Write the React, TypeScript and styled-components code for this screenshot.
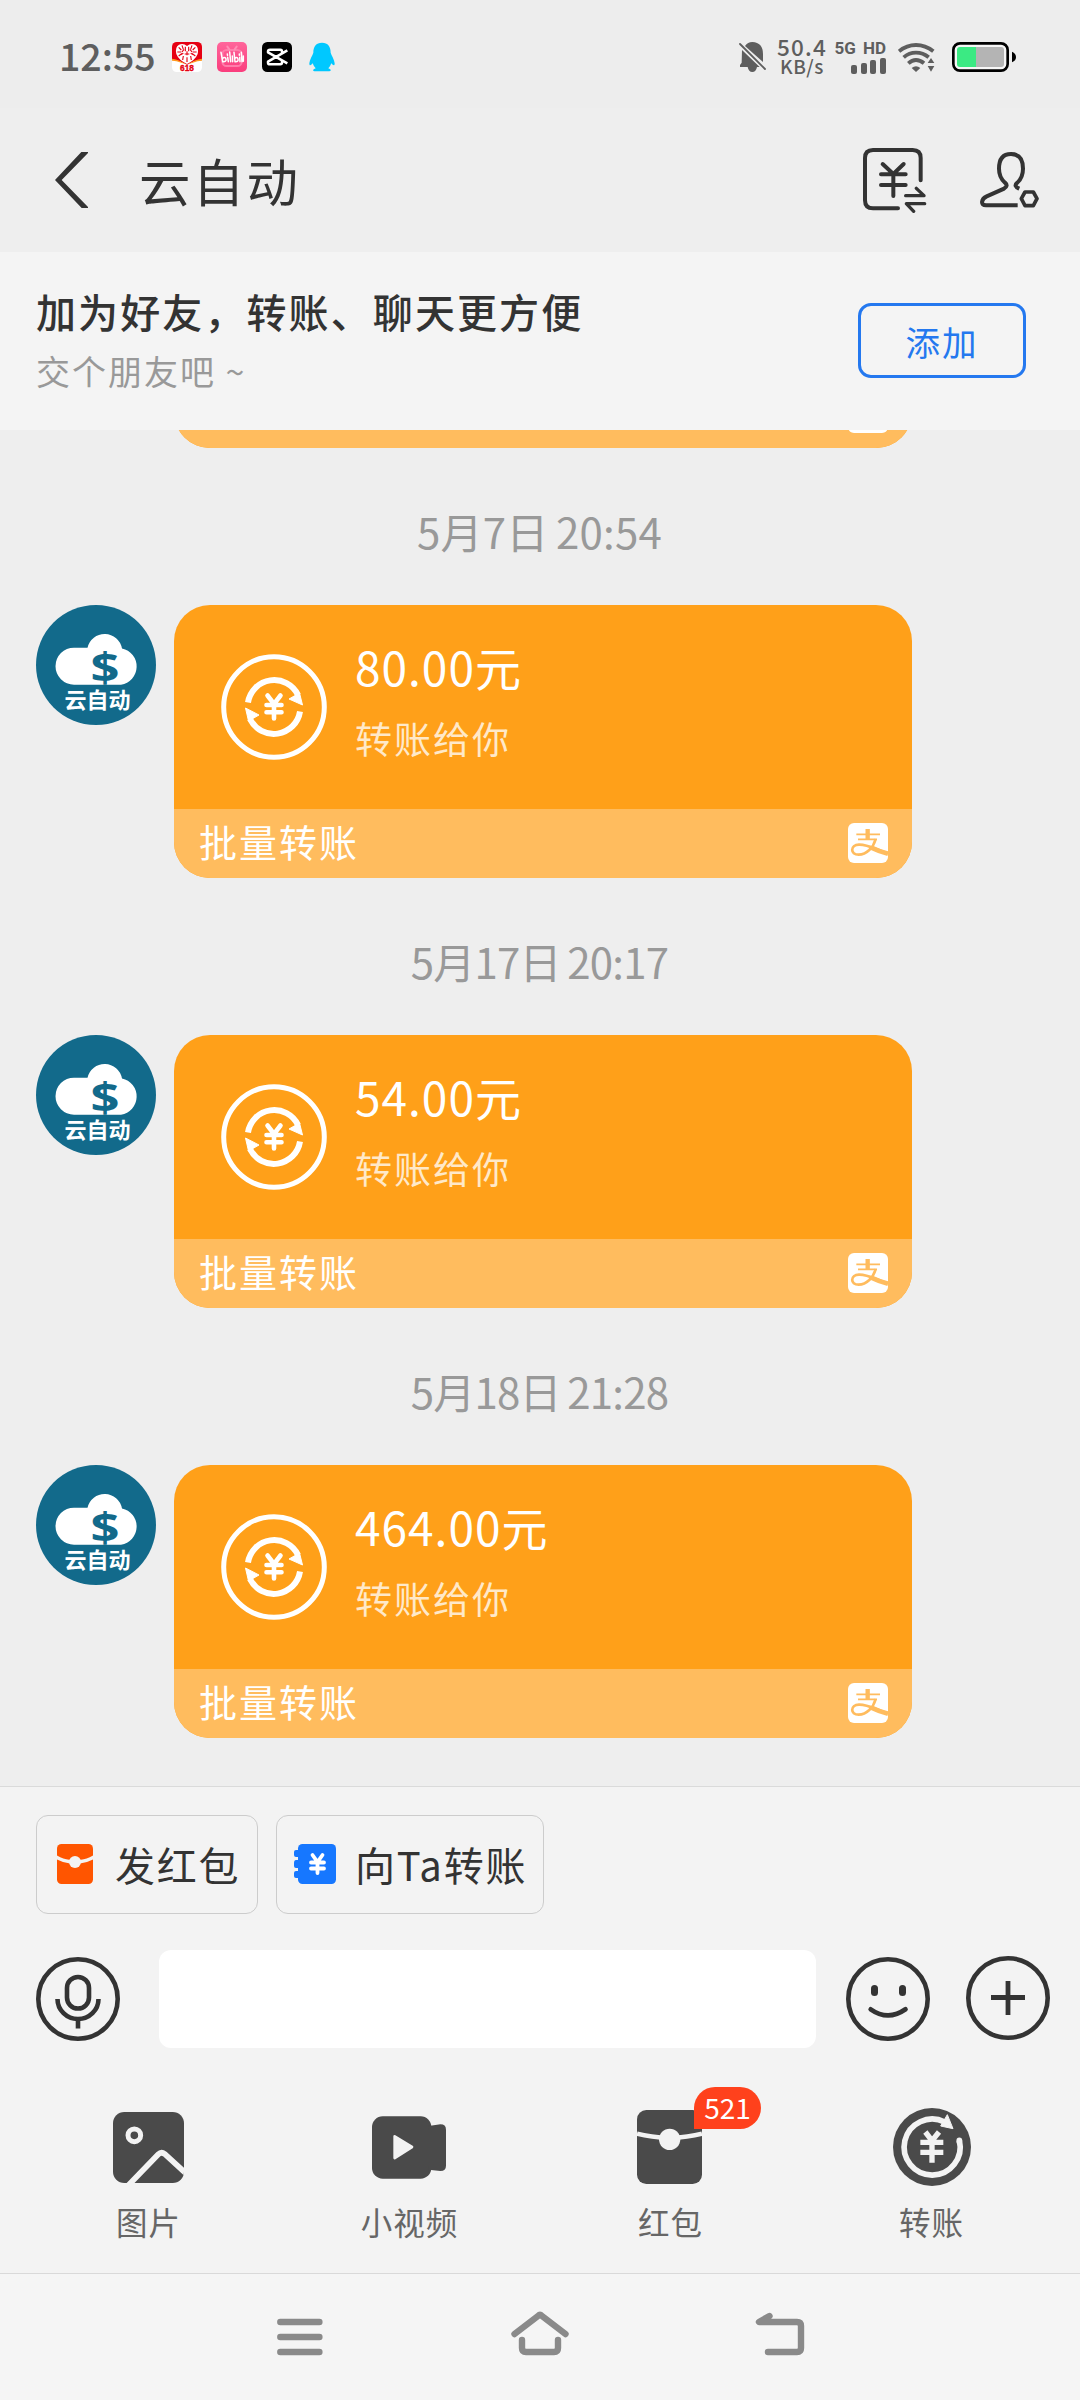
import React from 'react';
import styled, { createGlobalStyle } from 'styled-components';

const Global = createGlobalStyle`
  * { box-sizing: border-box; }
  body { margin: 0; background: #eeeeee; }
  svg { display: block; flex: none; }
`;

const Screen = styled.div`
  width: 1080px;
  height: 2400px;
  display: flex;
  flex-direction: column;
  background: #eeeeee;
  color: #333;
  font-family: 'Noto Sans CJK SC', sans-serif;
  overflow: hidden;
`;

/* ---------- status bar ---------- */
const StatusBar = styled.div`
  flex: none;
  height: 108px;
  padding: 6px 64px 0 59px;
  display: flex;
  align-items: center;
  background: #ededed;
  color: #5e5e5e;
`;
const Clock = styled.div`
  width: 113px;
  padding-bottom: 4px;
  font-size: 37.5px;
  font-weight: 500;
  line-height: 40px;
`;
const AppIcons = styled.div`
  display: flex;
  gap: 15px;
  flex: 1;
`;
const Speed = styled.div`
  width: 52px;
  margin-left: 10px;
  padding-bottom: 3px;
  text-align: center;
  font-weight: 500;
  font-size: 22.5px;
  line-height: 21px;
  letter-spacing: 1.2px;
  white-space: nowrap;
`;
const SpeedUnit = styled.div`
  font-size: 19px;
  line-height: 18px;
  letter-spacing: 0.5px;
`;
const Cellular = styled.div`
  width: 50px;
  margin: 0 12px 0 8px;
  padding-bottom: 2px;
  display: flex;
  flex-direction: column;
  align-items: flex-end;
  font-family: 'Roboto', sans-serif;
  font-weight: 700;
  font-size: 17px;
  line-height: 18px;
  word-spacing: 3px;
  white-space: nowrap;
`;
const Bars = styled.div`
  display: flex;
  align-items: flex-end;
  gap: 3.6px;
  height: 16px;
  margin-top: 1px;
`;
const Bar = styled.div<{ $h: number }>`
  width: 6px;
  height: ${(p) => p.$h}px;
  border-radius: 2px;
  background: #5e5e5e;
`;

/* ---------- header ---------- */
const Header = styled.header`
  flex: none;
  height: 144px;
  padding: 0 41px 0 55px;
  display: flex;
  align-items: center;
`;
const Title = styled.h1`
  flex: 1;
  margin: 0 0 0 51px;
  font-size: 51.5px;
  font-weight: 400;
  line-height: 76px;
  letter-spacing: 2.2px;
  padding-bottom: 1px;
`;
const HeaderActions = styled.div`
  display: flex;
  align-items: center;
  gap: 53px;
`;

/* ---------- banner ---------- */
const Banner = styled.section`
  flex: none;
  height: 178px;
  padding: 0 54px 1px 36px;
  display: flex;
  align-items: center;
  justify-content: space-between;
  background: #f4f4f4;
`;
const BannerTitle = styled.div`
  font-size: 40px;
  font-weight: 500;
  line-height: 60px;
  letter-spacing: 2.1px;
`;
const BannerSub = styled.div`
  font-size: 34px;
  line-height: 58px;
  letter-spacing: 2px;
  padding-top: 1px;
  color: #999;
`;
const AddButton = styled.button`
  width: 168px;
  height: 75px;
  padding: 0;
  border: 3px solid #2478ef;
  border-radius: 13px;
  background: transparent;
  color: #2478ef;
  font: 400 34.5px/64px 'Noto Sans CJK SC', sans-serif;
  letter-spacing: 2px;
`;

/* ---------- chat ---------- */
const Chat = styled.main`
  flex: none;
  height: 1356px;
  overflow: hidden;
  display: flex;
  flex-direction: column;
  justify-content: flex-end;
  padding-bottom: 48px;
`;
const Stamp = styled.div<{ $track: number }>`
  flex: none;
  height: 157px;
  padding-right: 1px;
  text-align: center;
  font-size: 42px;
  line-height: 166px;
  letter-spacing: ${(p) => p.$track}px;
  color: #999;
  word-spacing: -2px;
`;
const Message = styled.div`
  flex: none;
  display: flex;
  align-items: flex-start;
  gap: 18px;
  padding-left: 36px;
`;
const AvatarSlot = styled.div`
  width: 120px;
`;
const Card = styled.div`
  width: 738px;
  height: 273px;
  border-radius: 36px;
  overflow: hidden;
  display: flex;
  flex-direction: column;
  background: #ffa019;
  color: #fff;
`;
const CardBody = styled.div`
  flex: 1;
  display: flex;
  align-items: center;
  gap: 28px;
  padding-left: 47px;
`;
const CardText = styled.div`
  padding-bottom: 10px;
`;
const Amount = styled.div`
  font-size: 46px;
  line-height: 68px;
  letter-spacing: 1px;
`;
const CardNote = styled.div`
  margin-top: 3px;
  font-size: 37px;
  line-height: 70px;
  letter-spacing: 2px;
  color: #ffe9c9;
`;
const CardFooter = styled.div`
  height: 69px;
  padding: 0 24px 1px 25px;
  display: flex;
  align-items: center;
  justify-content: space-between;
  background: #ffbc5e;
  font-size: 38px;
  line-height: 60px;
  letter-spacing: 2px;
`;
const FooterLabel = styled.span`
  padding-bottom: 5px;
`;

/* ---------- composer ---------- */
const Composer = styled.footer`
  flex: none;
  height: 487px;
  border-top: 1px solid #dadada;
  background: #f3f3f3;
`;
const Chips = styled.div`
  display: flex;
  gap: 18px;
  padding: 28px 36px 0;
`;
const Chip = styled.button<{ $w: number; $pad: number; $gap: number }>`
  width: ${(p) => p.$w}px;
  height: 99px;
  padding: 0 0 1px ${(p) => p.$pad}px;
  display: flex;
  align-items: center;
  gap: ${(p) => p.$gap}px;
  border: 1px solid #ccc;
  border-radius: 12px;
  background: transparent;
  color: #333;
  font: 400 40px/60px 'Noto Sans CJK SC', sans-serif;
  letter-spacing: 1.8px;
  white-space: nowrap;
`;
const InputRow = styled.div`
  display: flex;
  align-items: center;
  padding: 36px 30px 0 36px;
`;
const Input = styled.input`
  width: 657px;
  height: 98px;
  margin: 0 30px 0 39px;
  border: 0;
  border-radius: 12px;
  background: #fff;
`;
const Tools = styled.div`
  display: flex;
  padding: 54px 18px 0;
`;
const Tool = styled.div`
  width: 261px;
  display: flex;
  flex-direction: column;
  align-items: center;
  font-size: 31.5px;
  line-height: 40px;
  letter-spacing: 1px;
  color: #666;
`;
const ToolIcon = styled.div<{ $shift?: number }>`
  position: relative;
  height: 90px;
  margin-right: ${(p) => p.$shift ?? 0}px;
  display: flex;
  align-items: center;
`;
const ToolLabel = styled.div`
  margin-top: 9px;
`;
const Badge = styled.span`
  position: absolute;
  left: 57px;
  top: -15px;
  width: 67px;
  height: 42px;
  border-radius: 21px 21px 21px 0;
  background: #ff411c;
  color: #fff;
  text-align: center;
  font-size: 28px;
  line-height: 41px;
  letter-spacing: 0;
`;

/* ---------- navigation ---------- */
const NavBar = styled.nav`
  flex: 1;
  border-top: 1px solid #d9d9d9;
  background: #f5f5f5;
  display: flex;
  justify-content: center;
  padding-top: 36px;
`;
const NavItem = styled.div`
  width: 240px;
  display: flex;
  justify-content: center;
`;

const BackChevron = () => (
  <svg width="33" height="56" viewBox="0 0 99 168">
    <path d="M79 0H99V3L20 84L99 165V168H80L0 84Z" fill="#333" />
  </svg>
);

const JdIcon = () => (
  <svg width="30" height="30" viewBox="0 0 90 90">
    <defs>
      <clipPath id="jd"><rect width="90" height="90" rx="14" /></clipPath>
    </defs>
    <g clipPath="url(#jd)">
      <rect width="90" height="90" fill="#fff" />
      <path d="M0 0H90V52Q66 56 45 68Q24 56 0 52Z" fill="#e60012" />
      <path d="M0 50Q24 54 42 67L30 63Q12 56 0 56ZM90 50Q66 54 48 67L60 63Q78 56 90 56Z" fill="#ff9a1f" />
      <path d="M45 12Q34 2 21 8Q8 16 13 36Q20 54 45 66Q70 54 77 36Q82 16 69 8Q56 2 45 12Z" fill="#fff" />
      <path d="M20 16l8 8M30 10l4 12M16 30h12M20 42l10-8M32 54l2-12M40 14v14M34 34l-8 4M70 16l-8 8M60 10l-4 12M74 30H62M70 42l-10-8M58 54l-2-12M50 14v14M56 34l8 4M38 36h14M45 28v12M45 46v14M36 22l-6 8M54 22l6 8" stroke="#e60012" strokeWidth="3.4" fill="none" />
      <text x="45" y="86" textAnchor="middle" fontFamily="Liberation Sans, sans-serif" fontWeight="700" fontSize="25" fill="#e60012" stroke="#e60012" strokeWidth="1">618</text>
    </g>
  </svg>
);

const BiliIcon = () => (
  <svg width="30" height="30" viewBox="0 0 90 90">
    <defs>
      <linearGradient id="bl" x1="0" y1="0" x2="0" y2="1">
        <stop offset="0" stopColor="#ff659b" />
        <stop offset="1" stopColor="#fa3d7d" />
      </linearGradient>
    </defs>
    <rect width="90" height="90" rx="15" fill="url(#bl)" />
    <rect x="16" y="24" width="58" height="48" rx="13" fill="none" stroke="#ff7dab" strokeWidth="6" />
    <path d="M31 14l6 8M59 14l-6 8" stroke="#ff8db5" strokeWidth="6" strokeLinecap="round" />
    <path d="M12 31L17 59Q29 60 27 51Q24 43 16 50M32 46L34 59M31 36L31.600 40M38 30L41 59M46 42L47 59M51 31L54 59Q65 60 63 51Q60 43 53 50M68 46L69 59M67 36V40M73 31L75 59M79 42V58" fill="none" stroke="#fff" strokeWidth="4.500" strokeLinecap="round" />
  </svg>
);

const CapCutIcon = () => (
  <svg width="30" height="30" viewBox="0 0 90 90">
    <rect width="90" height="90" rx="16" fill="#000" />
    <path d="M76 25L18 59V62Q18 67 24 67H55Q60 67 60 61V58M76 64L18 31V28Q18 23 24 23H55Q60 23 60 29V32" fill="none" stroke="#fff" strokeWidth="7.500" strokeLinejoin="round" />
  </svg>
);

const QqIcon = () => (
  <svg width="30" height="30" viewBox="-5 0 90 90">
    <path d="M40 2C22 2 14 14 14 32C12 40 3 52 2 64C2 74 7 70 12 64C14 70 17 75 21 79C13 82 11 87 17 88H62C69 87 67 82 59 79C63 75 66 70 68 64C73 70 78 74 78 64C77 52 68 40 66 32C66 14 58 2 40 2Z" fill="#00c8ff" />
  </svg>
);

const BellOff = () => (
  <svg width="27" height="31" viewBox="0 0 81 93">
    <path d="M18 12Q26 0 40 0Q72 2 72 36V60L18 12ZM9 24L62 75H54Q51 90 40 90Q29 90 26 75H3V69L8 62Z" fill="#5e5e5e" />
    <path d="M3 6L78 81" stroke="#5e5e5e" strokeWidth="5.500" strokeLinecap="round" />
  </svg>
);

const Wifi = () => (
  <svg width="37" height="29" viewBox="0 0 111 87">
    <g fill="none" stroke="#5e5e5e" strokeWidth="11.500">
      <path d="M3 25Q26 6 54 6T106 25" />
      <path d="M17 43Q33 29 54 29T92 43" />
      <path d="M31 61Q42 51 54 51T78 61" />
    </g>
    <path d="M41 75Q54 64 67 75L54 87Z" fill="#5e5e5e" />
    <path d="M99 45L109 60H89ZM99 86L109 69H89Z" fill="#5e5e5e" />
  </svg>
);

const BatteryIcon = styled.svg`
  margin-left: 17px;
`;
const Battery = () => (
  <BatteryIcon width="64" height="30" viewBox="0 0 192 90">
    <rect x="4" y="4" width="163" height="82" rx="20" fill="#f6f6f6" stroke="#000" strokeWidth="8" />
    <path d="M24 15H72V75H24Q15 75 15 66V24Q15 15 24 15Z" fill="#3bea83" />
    <path d="M72 15H147Q156 15 156 24V66Q156 75 147 75H72Z" fill="#b4b4b4" />
    <path d="M180 29Q192 34 192 45T180 61Z" fill="#000" />
  </BatteryIcon>
);

const PayIcon = () => (
  <svg width="64" height="65" viewBox="0 0 192 195">
    <g fill="none" stroke="#333" strokeWidth="12" strokeLinecap="round">
      <path d="M173 97V30Q173 6 149 6H30Q6 6 6 30V157Q6 181 30 181H105" />
      <path d="M59 48L91 78L122 48M54 79H128M54 111H128M91 78V144" />
      <path d="M128 143H183L160 121M185 167H130L152 190" strokeWidth="10" strokeLinejoin="round" />
    </g>
  </svg>
);

const PersonIcon = () => (
  <svg width="59" height="56" viewBox="0 0 177 168">
    <path d="M118 110Q99 102 112 92Q129 76 129 50Q129 6 93 6T57 50Q57 76 75 92Q86 101 72 110L20 133C4 140 0 160 18 160H113" fill="none" stroke="#333" strokeWidth="12" />
    <path d="M124 140L135 120H160L171 140L160 161H135Z" fill="none" stroke="#333" strokeWidth="11" strokeLinejoin="round" />
  </svg>
);

const Avatar = () => (
  <svg width="120" height="120" viewBox="0 0 120 120">
    <circle cx="60" cy="60" r="60" fill="#126a8b" />
    <path d="M38 42.700H51.500A17.600 17.600 0 0 1 86 43.500A18.400 18.400 0 0 1 85 79.700H38A18.500 18.500 0 0 1 38 42.700Z" fill="#fff" />
    <text x="69" y="76.500" textAnchor="middle" fontFamily="Noto Sans, sans-serif" fontWeight="700" fontSize="42" fill="#126a8b" textLength="29" lengthAdjust="spacingAndGlyphs">$</text>
    <text x="61.500" y="103" textAnchor="middle" fontFamily="Noto Sans CJK SC, sans-serif" fontWeight="700" fontSize="22" fill="#fff">云自动</text>
  </svg>
);

const TransferRing = () => (
  <svg width="106" height="106" viewBox="-53 -53 106 106">
    <g fill="none" stroke="#fff">
      <circle r="50.300" strokeWidth="5" />
      <path d="M-26 -4.500A26.500 26.500 0 0 1 24 -12M26 4.500A26.500 26.500 0 0 1 -24 12" strokeWidth="6" />
      <path d="M-6.500 -11.500L0 -3L6.500 -11.500M0 -3V11.500M-7.500 -2H7.500M-7.500 5.200H7.500" strokeWidth="4.600" strokeLinecap="round" />
    </g>
    <path d="M28.500 -2L15 -8L25.500 -14ZM-28.500 1L-15 8L-25.500 14Z" fill="#fff" stroke="#fff" strokeLinejoin="round" />
  </svg>
);

const AlipayMark = () => (
  <svg width="40" height="40" viewBox="0 0 120 120">
    <rect width="120" height="120" rx="18" fill="#fff" />
    <g fill="none" stroke="#ffbc5e">
      <path d="M59 18V48" strokeWidth="13" />
      <path d="M25 34H96M30 49H87" strokeWidth="5.500" />
      <path d="M83 48C76 74 56 95 32 95C6 95 6 66 33 65C62 64 86 82 120 91" strokeWidth="8" />
      <path d="M70 74Q92 85 120 92" strokeWidth="14" />
    </g>
  </svg>
);

const PacketIcon = () => (
  <svg width="36" height="40" viewBox="0 0 36 40">
    <rect width="36" height="40" rx="4.500" fill="#ff5500" />
    <path d="M-1 13Q6 17 12 17.500H24Q30 17 37 13" fill="none" stroke="#f3f3f3" strokeWidth="3.400" />
    <circle cx="18" cy="18" r="6" fill="#f3f3f3" />
  </svg>
);

const BookIcon = () => (
  <svg width="42" height="40" viewBox="0 0 42 40">
    <rect x="4" width="38" height="40" rx="4.500" fill="#1677ff" />
    <path d="M0 8Q0 6 2 6H8V34H2Q0 34 0 32V29Q0 27 2 27H4V24H2Q0 24 0 22V19Q0 16 2 16H4V13H2Q0 13 0 11Z" fill="#1677ff" />
    <path d="M18.500 11L23.500 18L28.500 11M23.500 18V29M17 18.500H30M17 24.500H30" fill="none" stroke="#fff" strokeWidth="3.800" strokeLinecap="round" />
  </svg>
);

const MicIcon = () => (
  <svg width="84" height="84" viewBox="0 0 84 84">
    <g fill="none" stroke="#333" strokeWidth="4.600">
      <circle cx="42" cy="42" r="39.700" />
      <rect x="31" y="20" width="22" height="31.500" rx="11" />
      <path d="M21.500 42A20.500 20 0 0 0 62.500 42M42 62V71.500" />
    </g>
  </svg>
);

const SmileIcon = () => (
  <svg width="84" height="84" viewBox="0 0 84 84">
    <circle cx="42" cy="42" r="39.700" fill="none" stroke="#333" strokeWidth="4.600" />
    <rect x="25" y="28" width="7" height="11" rx="3.500" fill="#333" />
    <rect x="53" y="28" width="7" height="11" rx="3.500" fill="#333" />
    <path d="M24.700 52.300Q42 64.500 59.500 52.300" fill="none" stroke="#333" strokeWidth="4.700" strokeLinecap="round" />
  </svg>
);

const PlusSvg = styled.svg`
  margin: -2px 0 0 36px;
`;
const PlusIcon = () => (
  <PlusSvg width="84" height="84" viewBox="0 0 84 84">
    <circle cx="42" cy="42" r="39.700" fill="none" stroke="#333" strokeWidth="4.600" />
    <path d="M25 41.500H59M42 25V59" stroke="#333" strokeWidth="4.800" />
  </PlusSvg>
);

const PhotoIcon = () => (
  <svg width="71" height="71" viewBox="0 0 213 213">
    <defs>
      <clipPath id="ph"><rect width="213" height="213" rx="34" /></clipPath>
    </defs>
    <g clipPath="url(#ph)">
      <rect width="213" height="213" fill="#4a4a4a" />
      <circle cx="64" cy="70" r="19" fill="none" stroke="#f3f3f3" strokeWidth="15" />
      <path d="M46 220L136 127Q145 118 155 126L220 185" fill="none" stroke="#f3f3f3" strokeWidth="17" />
    </g>
  </svg>
);

const VideoIcon = () => (
  <svg width="74" height="63" viewBox="0 0 222 187">
    <rect width="178" height="187" rx="32" fill="#4a4a4a" />
    <path d="M170 29L205 24Q222 24 222 40V148Q222 164 205 164L170 160Z" fill="#4a4a4a" />
    <path d="M68 60L120 92L68 125Z" fill="#f3f3f3" stroke="#f3f3f3" strokeWidth="8" strokeLinejoin="round" />
  </svg>
);

const EnvelopeIcon = () => (
  <svg width="65" height="74" viewBox="0 0 195 222">
    <rect width="195" height="222" rx="28" fill="#4a4a4a" />
    <path d="M0 71Q40 82 98 84Q155 82 195 71" fill="none" stroke="#f3f3f3" strokeWidth="13" />
    <circle cx="98" cy="88" r="32" fill="#f3f3f3" />
  </svg>
);

const TransferIcon = () => (
  <svg width="78" height="78" viewBox="0 0 234 234">
    <circle cx="117" cy="117" r="117" fill="#4a4a4a" />
    <g fill="none" stroke="#f3f3f3" strokeWidth="17">
      <path d="M199 97A84 84 0 1 1 155 42" />
      <path d="M199 101V97" strokeLinecap="round" />
      <path d="M97 72L117 98L138 72M82 103H151M82 133H151M117 98V164" strokeWidth="16" />
    </g>
    <path d="M163 20L180 62L143 54Z" fill="#f3f3f3" stroke="#f3f3f3" strokeWidth="3" strokeLinejoin="round" />
  </svg>
);

const strokeNav = { fill: 'none', stroke: '#8a8a8a', strokeWidth: 6.4, strokeLinecap: 'round', strokeLinejoin: 'round' } as const;

const MenuNav = () => (
  <svg width="60" height="52" viewBox="0 0 60 52">
    <path d="M10.300 12H49.400M10.300 27H49.400M10.300 42H49.400" {...strokeNav} />
  </svg>
);
const HomeNav = () => (
  <svg width="60" height="52" viewBox="0 0 60 52">
    <path d="M4.500 24L28 6Q30 4 32 6L55.500 24M12 30V38Q12 42 16 42H44Q48 42 48 38V30" {...strokeNav} />
  </svg>
);
const BackNav = () => (
  <svg width="60" height="52" viewBox="0 0 60 52">
    <path d="M19.500 6L9 12H47Q51 12 51 16V38Q51 42 47 42H18" {...strokeNav} />
  </svg>
);

const TransferCard = ({ amount }: { amount: string }) => (
  <Message>
    <AvatarSlot><Avatar /></AvatarSlot>
    <Card>
      <CardBody>
        <TransferRing />
        <CardText>
          <Amount>{amount}元</Amount>
          <CardNote>转账给你</CardNote>
        </CardText>
      </CardBody>
      <CardFooter>
        <FooterLabel>批量转账</FooterLabel>
        <AlipayMark />
      </CardFooter>
    </Card>
  </Message>
);

/* The card that has almost scrolled away: only its lower edge is visible. */
const ScrolledCard = () => (
  <Message>
    <AvatarSlot />
    <Card>
      <CardBody />
      <CardFooter>
        <span />
        <AlipayMark />
      </CardFooter>
    </Card>
  </Message>
);

const transfers = [
  { time: '5月7日 20:54', amount: '80.00', track: 0.2 },
  { time: '5月17日 20:17', amount: '54.00', track: -0.8 },
  { time: '5月18日 21:28', amount: '464.00', track: -0.8 },
];

export default function App() {
  return (
    <Screen>
      <Global />
      <StatusBar>
        <Clock>12:55</Clock>
        <AppIcons>
          <JdIcon />
          <BiliIcon />
          <CapCutIcon />
          <QqIcon />
        </AppIcons>
        <BellOff />
        <Speed>
          50.4
          <SpeedUnit>KB/s</SpeedUnit>
        </Speed>
        <Cellular>
          5G HD
          <Bars>
            {[9, 11, 13.5, 16].map((h) => <Bar key={h} $h={h} />)}
          </Bars>
        </Cellular>
        <Wifi />
        <Battery />
      </StatusBar>

      <Header>
        <BackChevron />
        <Title>云自动</Title>
        <HeaderActions>
          <PayIcon />
          <PersonIcon />
        </HeaderActions>
      </Header>

      <Banner>
        <div>
          <BannerTitle>加为好友，转账、聊天更方便</BannerTitle>
          <BannerSub>交个朋友吧 ~</BannerSub>
        </div>
        <AddButton>添加</AddButton>
      </Banner>

      <Chat>
        <ScrolledCard />
        {transfers.map((t) => (
          <React.Fragment key={t.time}>
            <Stamp $track={t.track}>{t.time}</Stamp>
            <TransferCard amount={t.amount} />
          </React.Fragment>
        ))}
      </Chat>

      <Composer>
        <Chips>
          <Chip $w={222} $pad={20} $gap={22}>
            <PacketIcon />
            <span>发红包</span>
          </Chip>
          <Chip $w={268} $pad={17} $gap={19}>
            <BookIcon />
            <span>向Ta转账</span>
          </Chip>
        </Chips>
        <InputRow>
          <MicIcon />
          <Input />
          <SmileIcon />
          <PlusIcon />
        </InputRow>
        <Tools>
          <Tool>
            <ToolIcon><PhotoIcon /></ToolIcon>
            <ToolLabel>图片</ToolLabel>
          </Tool>
          <Tool>
            <ToolIcon $shift={2}><VideoIcon /></ToolIcon>
            <ToolLabel>小视频</ToolLabel>
          </Tool>
          <Tool>
            <ToolIcon $shift={2}>
              <EnvelopeIcon />
              <Badge>521</Badge>
            </ToolIcon>
            <ToolLabel>红包</ToolLabel>
          </Tool>
          <Tool>
            <ToolIcon><TransferIcon /></ToolIcon>
            <ToolLabel>转账</ToolLabel>
          </Tool>
        </Tools>
      </Composer>

      <NavBar>
        <NavItem><MenuNav /></NavItem>
        <NavItem><HomeNav /></NavItem>
        <NavItem><BackNav /></NavItem>
      </NavBar>
    </Screen>
  );
}
